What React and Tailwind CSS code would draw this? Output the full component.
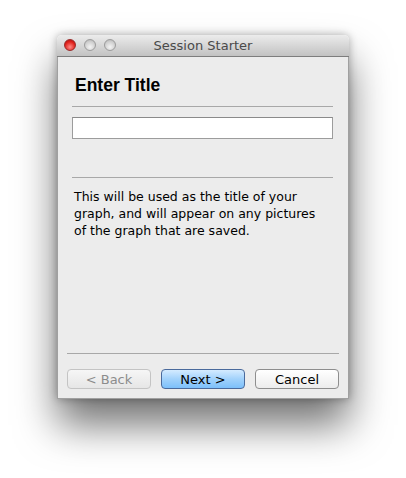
export default function App() {
  const btn = 'h-[20px] w-[84px] rounded-[4px] border text-[13px] leading-none flex items-center justify-center';
  return (
    <div className="w-[406px] h-[478px] bg-white pt-[35px] pl-[57px]" style={{ fontFamily: '"DejaVu Sans", sans-serif' }}>
      <div className="w-[292px] h-[364px] flex flex-col rounded-t-[5px] shadow-[0_26px_40px_rgba(0,0,0,0.55),0_0_8px_rgba(0,0,0,0.3)]">
        {/* title bar */}
        <div className="relative h-[22px] rounded-t-[5px] bg-gradient-to-b from-[#ececec] to-[#c2c2c2] border-b border-[#7d7d7d] flex items-center justify-center">
          <div className="absolute left-[7px] top-[4px] flex gap-[8px]">
            <span className="w-[12px] h-[12px] rounded-full border border-[#9a2a2a] bg-[radial-gradient(circle_at_50%_70%,#ff8a86,#e0211b_60%,#a80f0c)]" />
            <span className="w-[12px] h-[12px] rounded-full border border-[#9c9c9c] bg-[radial-gradient(circle_at_50%_70%,#f4f4f4,#d0d0d0_60%,#b0b0b0)]" />
            <span className="w-[12px] h-[12px] rounded-full border border-[#9c9c9c] bg-[radial-gradient(circle_at_50%_70%,#f4f4f4,#d0d0d0_60%,#b0b0b0)]" />
          </div>
          <span className="text-[13px] text-[#4a4a4a] leading-none">Session Starter</span>
        </div>
        {/* body */}
        <div className="flex-1 bg-[#ececec] border-x border-b border-[#a0a0a0] flex flex-col">
          <div className="pl-[17px] pt-[18px] h-[49px]">
            <h1 className="text-[17.5px] font-bold text-black leading-[20px]" style={{ fontFamily: '"Liberation Sans", Arial, sans-serif' }}>Enter Title</h1>
          </div>
          <div className="mx-[14px] mr-[15px] h-px bg-[#a8a8a8]" />
          <div className="mx-[14px] mr-[15px] mt-[10px] h-[22px] bg-white border border-[#9c9c9c] border-t-[#8a8a8a]" />
          <div className="mx-[14px] mr-[15px] mt-[38px] h-px bg-[#a8a8a8]" />
          <p className="ml-[16px] mr-[28px] mt-[10px] text-[12.5px] leading-[17px] text-black">
            This will be used as the title of your graph, and will appear on any pictures of the graph that are saved.
          </p>
          <div className="flex-1" />
          <div className="mx-[9px] h-px bg-[#a8a8a8]" />
          <div className="flex gap-[10px] px-[9px] pt-[15px] pb-[9px]">
            <button className={`${btn} border-[#c4c4c4] bg-gradient-to-b from-[#f6f6f6] to-[#e6e6e6] text-[#8c8c8c]`}>&lt; Back</button>
            <button className={`${btn} border-[#4a6a9c] bg-gradient-to-b from-[#d4ebff] via-[#a2d2fb] to-[#7cc0fb] text-black`}>Next &gt;</button>
            <button className={`${btn} border-[#8e8e8e] bg-gradient-to-b from-white to-[#ececec] text-black`}>Cancel</button>
          </div>
        </div>
      </div>
    </div>
  );
}
